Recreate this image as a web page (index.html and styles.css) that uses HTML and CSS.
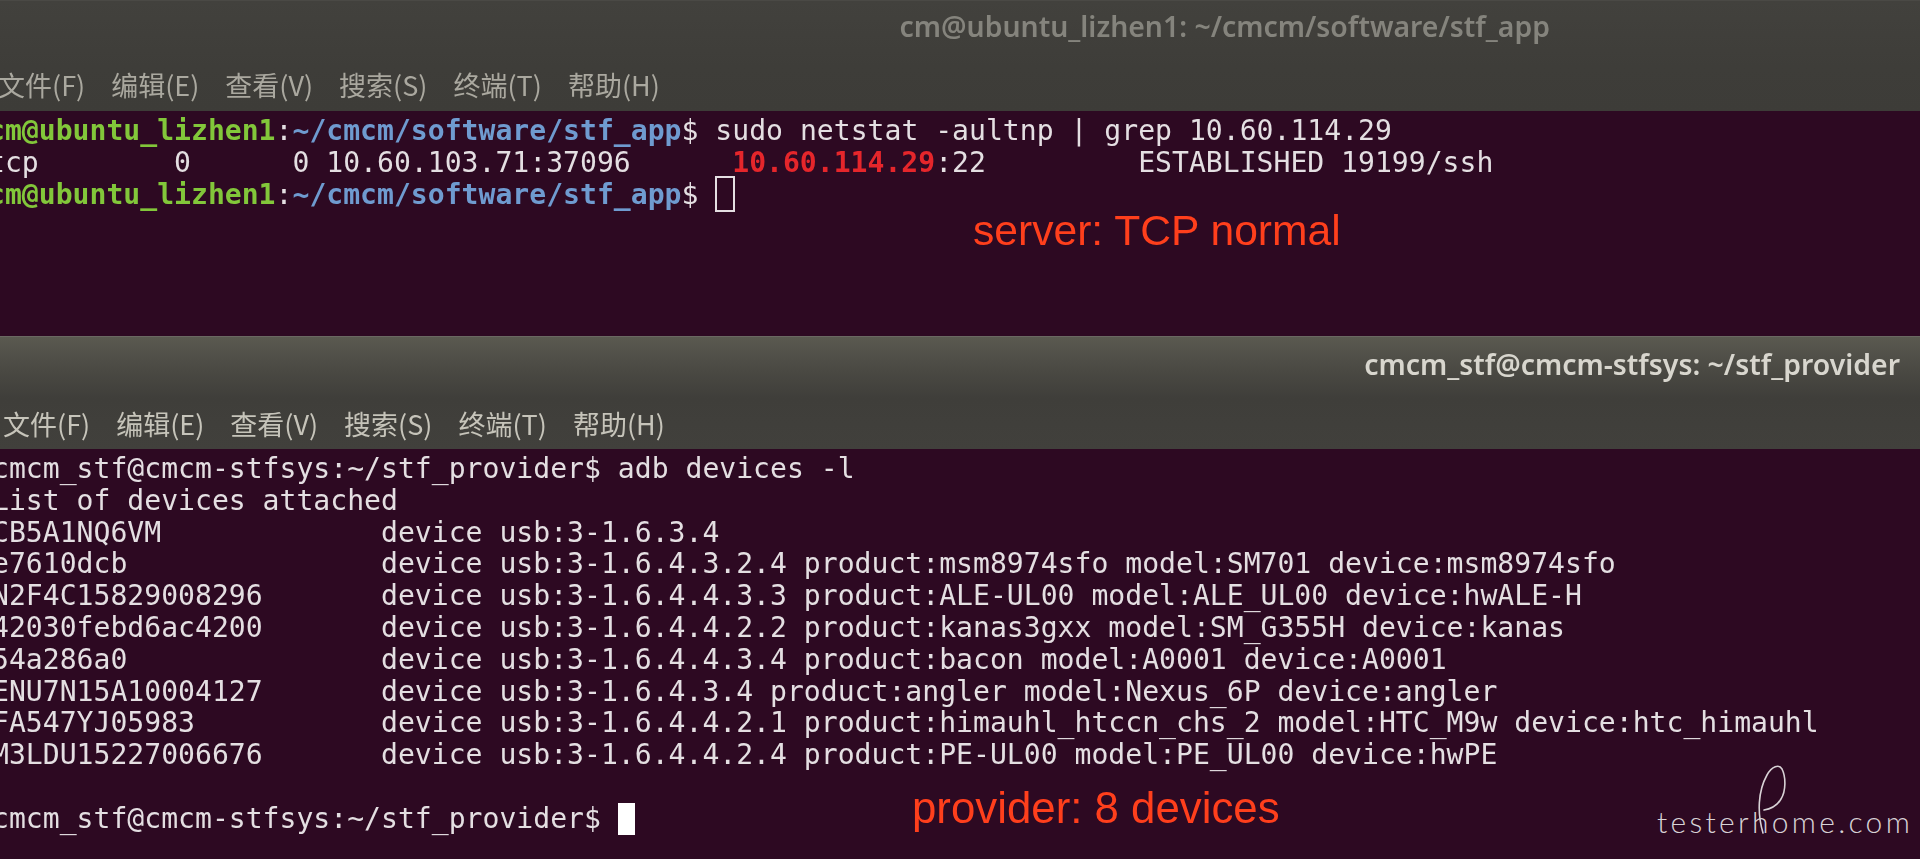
FILE: index.html
```html
<!DOCTYPE html>
<html lang="zh">
<head>
<meta charset="utf-8">
<title>Terminal windows</title>
<link rel="stylesheet" href="styles.css">
</head>
<body>
<main class="stage">
  <section class="window window-server">
    <header class="chrome">
      <h1 class="title">cm@ubuntu_lizhen1: ~/cmcm/software/stf_app</h1>
      <nav class="menu">
        <span>文件(F)</span><span>编辑(E)</span><span>查看(V)</span><span>搜索(S)</span><span>终端(T)</span><span>帮助(H)</span>
      </nav>
    </header>
    <pre class="term"><span class="green">cm@ubuntu_lizhen1</span>:<span class="blue">~/cmcm/software/stf_app</span>$ sudo netstat -aultnp | grep 10.60.114.29
tcp        0      0 10.60.103.71:37096      <span class="red">10.60.114.29</span>:22         ESTABLISHED 19199/ssh
<span class="green">cm@ubuntu_lizhen1</span>:<span class="blue">~/cmcm/software/stf_app</span>$ <span class="cursor hollow"> </span></pre>
    <p class="note note-server">server: TCP normal</p>
  </section>
  <section class="window window-provider">
    <header class="chrome">
      <h1 class="title">cmcm_stf@cmcm-stfsys: ~/stf_provider</h1>
      <nav class="menu">
        <span>文件(F)</span><span>编辑(E)</span><span>查看(V)</span><span>搜索(S)</span><span>终端(T)</span><span>帮助(H)</span>
      </nav>
    </header>
    <pre class="term">cmcm_stf@cmcm-stfsys:~/stf_provider$ adb devices -l
List of devices attached
CB5A1NQ6VM             device usb:3-1.6.3.4
e7610dcb               device usb:3-1.6.4.3.2.4 product:msm8974sfo model:SM701 device:msm8974sfo
N2F4C15829008296       device usb:3-1.6.4.4.3.3 product:ALE-UL00 model:ALE_UL00 device:hwALE-H
42030febd6ac4200       device usb:3-1.6.4.4.2.2 product:kanas3gxx model:SM_G355H device:kanas
54a286a0               device usb:3-1.6.4.4.3.4 product:bacon model:A0001 device:A0001
ENU7N15A10004127       device usb:3-1.6.4.3.4 product:angler model:Nexus_6P device:angler
FA547YJ05983           device usb:3-1.6.4.4.2.1 product:himauhl_htccn_chs_2 model:HTC_M9w device:htc_himauhl
M3LDU15227006676       device usb:3-1.6.4.4.2.4 product:PE-UL00 model:PE_UL00 device:hwPE

cmcm_stf@cmcm-stfsys:~/stf_provider$ <span class="cursor solid"> </span></pre>
    <p class="note note-provider">provider: 8 devices</p>
    <div class="watermark">
      <svg class="loop" viewBox="0 0 40 72" width="40" height="72" aria-hidden="true"><path d="M8 70C2 50 3 28 12 12C17 3 24 1 27 6C31 14 31 28 26 36C22 43 15 46 9 47"/></svg>
      <span class="mark-text">testerhome.com</span>
    </div>
  </section>
</main>
</body>
</html>
```
FILE: styles.css
```css
* { box-sizing: border-box; }
html, body { margin: 0; padding: 0; background: #2d0922; }
.stage { width: 1920px; height: 859px; overflow: hidden; display: flex; flex-direction: column; }
.window { position: relative; display: flex; flex-direction: column; }
.window-server { height: 336px; }
.window-provider { flex: 1; }

.chrome { height: 111px; display: flex; flex-direction: column; border-top: 1px solid #4a4945; }
.window-server .chrome { background: linear-gradient(#42413d 0, #3e3d39 60%, #3d3c38 100%); }
.window-provider .chrome { height: 113px; background: linear-gradient(#5a5950 0, #4a4943 30%, #3f3e3a 55%, #41403c 100%); border-top-color: #6a6862; }

.title { margin: 0; display: flex; align-items: center; justify-content: flex-end; font: 600 28.4px/1 "Noto Sans", sans-serif; filter: blur(.4px); }
.window-server .title { height: 50px; padding-right: 370px; color: #85847d; }
.window-provider .title { height: 54px; padding-right: 20px; color: #d8d6ce; }

.menu { display: flex; gap: 26px; align-items: center; padding-top: 6px; font: 400 27px/1 "Noto Sans CJK SC", "Noto Sans", sans-serif; filter: blur(.4px); }
.window-server .menu { height: 60px; margin-left: -2px; color: #aaa89f; }
.window-provider .menu { height: 58px; margin-left: 3px; color: #c6c4ba; }

.term { margin: 0 0 0 -8px; padding: 4px 0 0; flex: 1; font: 400 28.1px/31.8px "DejaVu Sans Mono", "Liberation Mono", monospace; color: #e4dfe2; background: #2d0922; white-space: pre; filter: blur(.45px); }
.window-server .term { margin-left: -12px; padding-top: 4px; }
.green { color: #82c73a; font-weight: 700; }
.blue { color: #6f9bd0; font-weight: 700; }
.red { color: #e5262b; font-weight: 700; }
.cursor { display: inline-block; vertical-align: top; width: 17px; height: 32px; }
.hollow { border: 2px solid #e4dfe2; width: 20px; height: 36px; margin-top: -3px; }
.solid { background: #fff; }

.note { position: absolute; margin: 0; font: 400 43px/1 "Liberation Sans", Arial, sans-serif; color: #ff3f1c; filter: blur(.3px); }
.note-server { left: 973px; top: 209px; font-size: 42.6px; }
.note-provider { left: 912px; top: 450px; font-size: 43.8px; }

.watermark { position: absolute; left: 1657px; top: 428px; width: 263px; height: 72px; color: #d8d2d6; }
.mark-text { position: absolute; left: 0; bottom: 0; font: 300 30px/1 Lato, sans-serif; letter-spacing: 3.3px; white-space: nowrap; }
.loop { position: absolute; left: 98px; top: -1px; }
.loop path { fill: none; stroke: #d8d2d6; stroke-width: 1.6; stroke-linecap: round; }
```
